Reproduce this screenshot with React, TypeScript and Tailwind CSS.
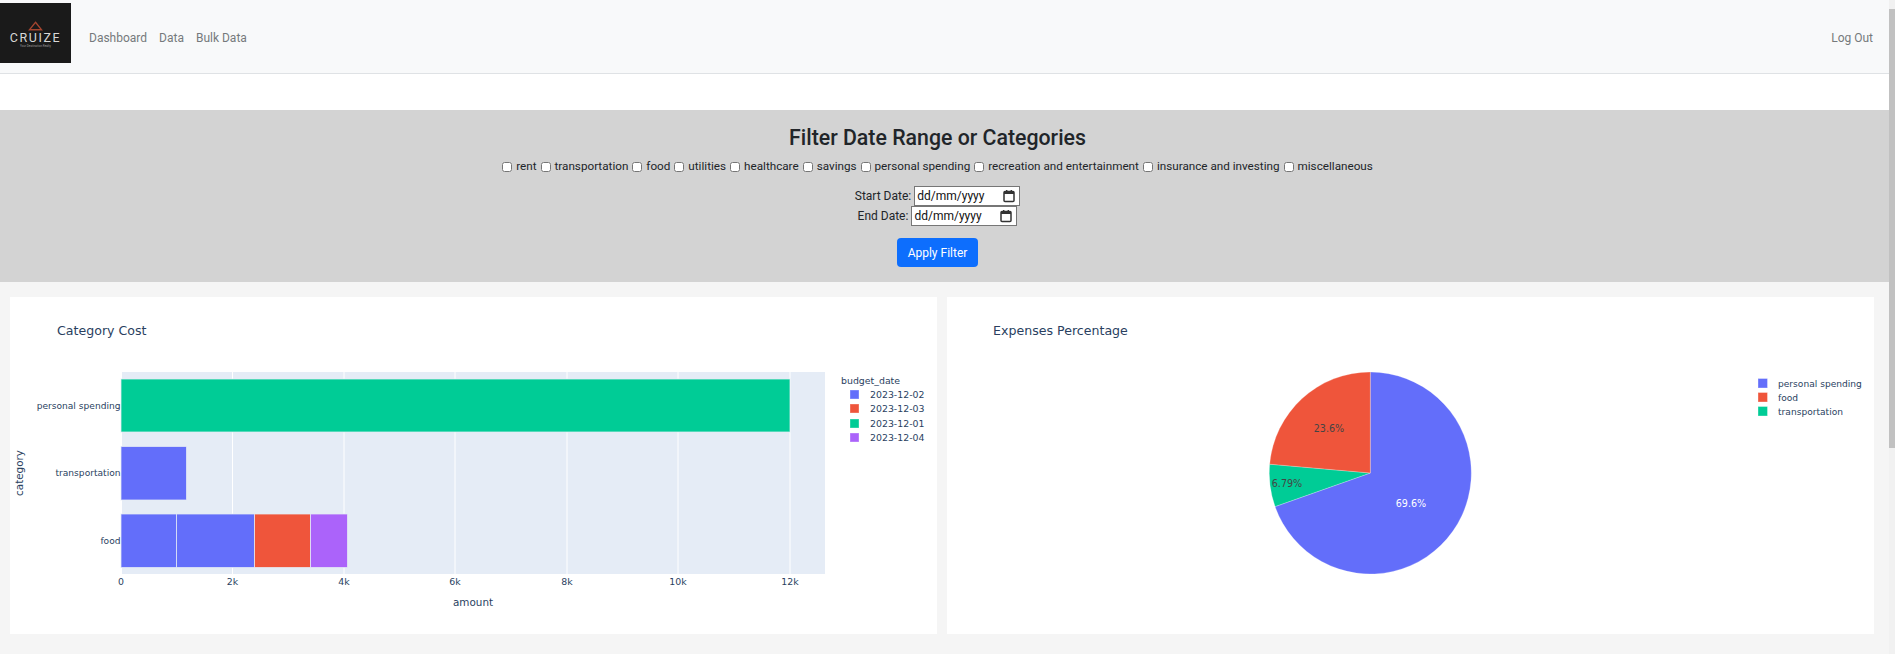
import React from "react";

const BLUE = "#636efa";
const RED = "#ef553b";
const GREEN = "#00cc96";
const PURPLE = "#ab63fa";
const CHART_FONT = "'DejaVu Sans', Verdana, sans-serif";

const categories = [
  "rent",
  "transportation",
  "food",
  "utilities",
  "healthcare",
  "savings",
  "personal spending",
  "recreation and entertainment",
  "insurance and investing",
  "miscellaneous",
];

const DateField = ({ label }: { label: string }) => (
  <div className="flex h-5 items-center justify-center gap-[3px] text-[12px]">
    <span>{label}</span>
    <div className="flex h-5 w-[106px] items-center justify-between border border-[#767676] bg-white pl-[2px] pr-[3px] text-[#111]">
      <span>dd/mm/yyyy</span>
      <svg width="14" height="14" viewBox="0 0 14 14" fill="none">
        <rect x="2" y="2.5" width="10" height="10" rx="1" stroke="#333" strokeWidth="1.5" />
        <rect x="2" y="2" width="10" height="3" fill="#333" />
        <rect x="4" y="1" width="1.4" height="2" fill="#333" />
        <rect x="8.6" y="1" width="1.4" height="2" fill="#333" />
      </svg>
    </div>
  </div>
);

const Navbar = () => (
  <nav className="flex h-[74px] items-start border-b border-[#dfe2e5] bg-[#f8f9fa] text-[12px] text-[#76797c]">
    <div className="mt-[3px] flex h-[60px] w-[71px] flex-col items-center justify-center bg-[#1a1a1a] pt-[3px]">
      <svg width="15" height="10" viewBox="0 0 16 10" fill="none">
        <path d="M8 1 L14.5 9 L1.5 9 Z" stroke="#a5452f" strokeWidth="1.4" />
      </svg>
      <span className="text-[12.5px] leading-[13px] tracking-[1.6px] text-[#d8d8d8]">CRUIZE</span>
      <span className="text-[3px] leading-[5px] text-[#999]">Your Destination Realty</span>
    </div>
    <div className="ml-[18px] mt-[29px] flex flex-1 items-center gap-[12px]">
      <a>Dashboard</a>
      <a>Data</a>
      <a>Bulk Data</a>
      <a className="ml-auto mr-[16px]">Log Out</a>
    </div>
  </nav>
);

const FilterPanel = () => (
  <section className="mt-[36px] flex h-[172px] flex-col items-center bg-[#d3d3d3] pr-[14px] pt-[13px] text-[11.7px] text-[#212529]">
    <h2 className="text-[21.3px] font-medium leading-[30px]">Filter Date Range or Categories</h2>
    <div className="mt-[4px] flex h-[20px] items-center gap-[4px]">
      {categories.map((c) => (
        <label key={c} className="flex items-center gap-[4px]">
          <input type="checkbox" className="h-[10px] w-[10px]" />
          <span>{c}</span>
        </label>
      ))}
    </div>
    <div className="mt-[9px] flex flex-col">
      <DateField label="Start Date:" />
      <DateField label="End Date:" />
    </div>
    <button className="mt-[12px] h-[29px] w-[81px] rounded-[4px] bg-[#0d6efd] text-[12px] text-white">Apply Filter</button>
  </section>
);

const Seg = ({ x, y, w, h, fill }: { x: number; y: number; w: number; h: number; fill: string }) => (
  <rect x={x} y={y} width={w} height={h} fill={fill} stroke="#e5ecf6" strokeOpacity="0.75" strokeWidth="1" />
);

const BarChart = () => {
  const ticks = [
    ["0", 111],
    ["2k", 222.5],
    ["4k", 334],
    ["6k", 445],
    ["8k", 557],
    ["10k", 668],
    ["12k", 780],
  ] as const;
  const legend = [
    ["2023-12-02", BLUE, 97.5],
    ["2023-12-03", RED, 111.5],
    ["2023-12-01", GREEN, 126.5],
    ["2023-12-04", PURPLE, 140.5],
  ] as const;
  return (
    <svg viewBox="0 0 927 337" className="block h-[337px] w-full" fontFamily={CHART_FONT} fill="#2a3f5f">
      <text x="47" y="37.5" fontSize="12.6">Category Cost</text>
      <rect x="112" y="75" width="703" height="202" fill="#e5ecf6" />
      {ticks.slice(1).map(([t, x]) => (
        <line key={t} x1={x} x2={x} y1="75" y2="277" stroke="#fff" />
      ))}
      <Seg x={111} y={82} w={669} h={53} fill={GREEN} />
      <Seg x={111} y={149.5} w={65.5} h={53.5} fill={BLUE} />
      <Seg x={111} y={217} w={55.5} h={53.5} fill={BLUE} />
      <Seg x={166.5} y={217} w={78} h={53.5} fill={BLUE} />
      <Seg x={244.5} y={217} w={56} h={53.5} fill={RED} />
      <Seg x={300.5} y={217} w={37} h={53.5} fill={PURPLE} />
      <g fontSize="9.1" textAnchor="end" fill="#2a3f5f">
        <text x="110.5" y="112">personal spending</text>
        <text x="110.5" y="179">transportation</text>
        <text x="110.5" y="246.5">food</text>
      </g>
      <g fontSize="9.4" textAnchor="middle">
        {ticks.map(([t, x]) => (
          <text key={t} x={x} y="287.5">{t}</text>
        ))}
      </g>
      <text x="463" y="308.5" fontSize="10.4" textAnchor="middle">amount</text>
      <text transform="translate(12.5 176) rotate(-90)" fontSize="10.4" textAnchor="middle">category</text>
      <text x="831" y="87" fontSize="9.4">budget_date</text>
      {legend.map(([t, c, y]) => (
        <g key={t}>
          <rect x="840" y={y - 4.5} width="9" height="9" fill={c} stroke="#fff" strokeOpacity="0.35" />
          <text x="860" y={y + 3.5} fontSize="9.4">{t}</text>
        </g>
      ))}
    </svg>
  );
};

const slicePath = (cx: number, cy: number, r: number, from: number, to: number) => {
  const pt = (f: number) => {
    const a = f * 2 * Math.PI;
    return `${cx + r * Math.sin(a)} ${cy - r * Math.cos(a)}`;
  };
  return `M${cx} ${cy} L${pt(from)} A${r} ${r} 0 ${to - from > 0.5 ? 1 : 0} 1 ${pt(to)} Z`;
};

const PieChart = () => {
  const cx = 423.3;
  const cy = 176;
  const r = 101;
  const legend = [
    ["personal spending", BLUE, 86],
    ["food", RED, 100],
    ["transportation", GREEN, 114],
  ] as const;
  return (
    <svg viewBox="0 0 927 337" className="block h-[337px] w-full" fontFamily={CHART_FONT} fill="#2a3f5f">
      <text x="46" y="37.5" fontSize="12.6">Expenses Percentage</text>
      <path d={slicePath(cx, cy, r, 0, 0.696)} fill={BLUE} stroke="#fff" strokeOpacity="0.4" strokeWidth="0.6" />
      <path d={slicePath(cx, cy, r, 0.696, 0.7639)} fill={GREEN} stroke="#fff" strokeOpacity="0.4" strokeWidth="0.6" />
      <path d={slicePath(cx, cy, r, 0.7639, 1)} fill={RED} stroke="#fff" strokeOpacity="0.4" strokeWidth="0.6" />
      <g fontSize="9.6" textAnchor="middle">
        <text x="464" y="209.5" fill="#fff">69.6%</text>
        <text x="382" y="134.5" fill="#444">23.6%</text>
        <text x="340" y="190" fill="#444">6.79%</text>
      </g>
      {legend.map(([t, c, y]) => (
        <g key={t}>
          <rect x="811" y={y - 4.5} width="9.5" height="9.5" fill={c} stroke="#fff" strokeOpacity="0.35" />
          <text x="831" y={y + 3.5} fontSize="9.1">{t}</text>
        </g>
      ))}
    </svg>
  );
};

const App = () => {
  return (
    <div className="flex h-[654px] overflow-hidden bg-[#f5f5f5] font-['Roboto',sans-serif]">
      <main className="min-w-0 flex-1">
        <div className="bg-white">
          <Navbar />
          <FilterPanel />
        </div>
        <div className="mt-[15px] grid grid-cols-2 gap-[10px] pl-[10px] pr-[15px]">
          <div className="bg-white"><BarChart /></div>
          <div className="bg-white"><PieChart /></div>
        </div>
      </main>
      <div className="w-[6px] bg-[#f1f1f1] pt-[9px]">
        <div className="h-[439px] bg-[#c1c1c1]" />
      </div>
    </div>
  );
};

export default App;
